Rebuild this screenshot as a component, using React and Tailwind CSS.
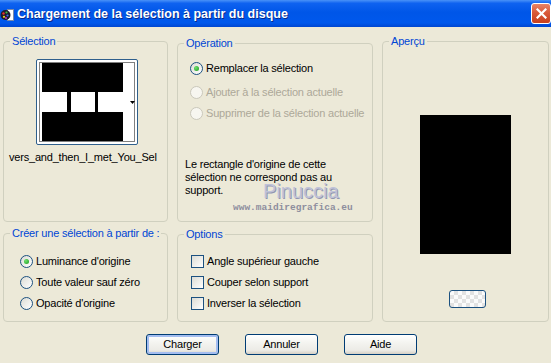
import React from "react";

function Group({ title, className, children }) {
  return (
    <fieldset className={`min-w-0 rounded-[4px] border border-[#d0d0bf] ${className}`}>
      <legend className="ml-[6px] px-[2px] text-[11px] leading-[13px] tracking-[-0.2px] text-[#0046d5]">
        {title}
      </legend>
      {children}
    </fieldset>
  );
}

function Radio({ checked, disabled }) {
  return (
    <span
      className={
        disabled
          ? "flex h-[13px] w-[13px] shrink-0 items-center justify-center rounded-full border border-[#cac8bb] bg-[#f7f6f0]"
          : "flex h-[13px] w-[13px] shrink-0 items-center justify-center rounded-full border border-[#1c5180] bg-[linear-gradient(135deg,#dcdcd4,#ffffff)]"
      }
    >
      {checked && (
        <span className="h-[5px] w-[5px] rounded-full bg-[radial-gradient(circle_at_35%_35%,#6fe06f,#1a9a1a)]" />
      )}
    </span>
  );
}

function Check() {
  return (
    <span className="block h-[13px] w-[13px] shrink-0 border border-[#1c5180] bg-[linear-gradient(135deg,#dcdcd4,#ffffff)]" />
  );
}

function Row({ children, label, disabled, className }) {
  return (
    <div className={`flex h-[13px] items-center gap-[3px] ${className || ""}`}>
      {children}
      <span
        className={`whitespace-nowrap text-[11px] leading-[13px] tracking-[-0.2px] ${
          disabled ? "text-[#aca899]" : "text-black"
        }`}
      >
        {label}
      </span>
    </div>
  );
}

function XPButton({ label, isDefault }) {
  return (
    <button
      className={`flex h-[21px] w-[73px] items-center justify-center rounded-[3px] border border-[#003c74] bg-[linear-gradient(180deg,#ffffff_0%,#f4f4f0_40%,#ecebe6_80%,#d6d0c5_100%)] text-[11px] leading-[13px] tracking-[-0.2px] text-black ${
        isDefault ? "shadow-[inset_0_0_0_2px_#a4bdf0]" : ""
      }`}
    >
      {label}
    </button>
  );
}

export default function App() {
  return (
    <div className="h-[363px] w-[551px] overflow-hidden bg-[#ece9d8] font-['Liberation_Sans',Arial,sans-serif] text-black">
      {/* Title bar */}
      <div className="flex h-[27px] items-center bg-[linear-gradient(180deg,#4a92f8_0%,#0f62f0_12%,#0056e8_45%,#0058ec_85%,#0046d0_100%)]">
        <svg width="15" height="16" viewBox="0 0 15 16" className="shrink-0">
          <rect x="7.5" y="3.5" width="6" height="11" fill="#ffffff" stroke="#7a8aa8" />
          <circle cx="5.5" cy="9" r="5" fill="#1b1b2b" />
          <circle cx="3.5" cy="7.5" r="1.2" fill="#e83030" />
          <circle cx="6.5" cy="6.5" r="1.1" fill="#40c040" />
          <circle cx="7.5" cy="9.5" r="1.1" fill="#3a6cf0" />
          <circle cx="4" cy="10.8" r="1.1" fill="#f0d020" />
          <circle cx="6" cy="12" r="0.9" fill="#d040d0" />
        </svg>
        <span className="ml-[2px] whitespace-nowrap text-[12.5px] font-bold leading-[16px] text-white [text-shadow:1px_1px_0_#0a2a8a]">
          Chargement de la sélection à partir du disque
        </span>
        <div className="ml-auto flex h-[21px] w-[20px] items-center justify-center rounded-[3px] border border-white bg-[linear-gradient(180deg,#e98466_0%,#d9593a_45%,#c8401e_100%)]">
          <svg width="11" height="11" viewBox="0 0 11 11">
            <path d="M1.5 1.5 L9.5 9.5 M9.5 1.5 L1.5 9.5" stroke="#ffffff" strokeWidth="2.2" strokeLinecap="square" />
          </svg>
        </div>
      </div>

      {/* Groups */}
      <div className="flex gap-[9px] pl-[3px] pt-[8px]">
        <div className="flex w-[165px] flex-col gap-[5px]">
          <Group title="Sélection" className="h-[187px]">
            <div className="ml-[32px] mt-[11px] h-[86px] w-[102px] rounded-[2px] border border-[#2f5f8c] bg-white">
              <svg width="100" height="84" viewBox="0 0 100 84" className="block">
                <rect x="5" y="3" width="81" height="29" fill="#000" />
                <rect x="30" y="32" width="4" height="20" fill="#000" />
                <rect x="58" y="32" width="3" height="20" fill="#000" />
                <rect x="5" y="52" width="81" height="29" fill="#000" />
                <rect
                  x="2.5"
                  y="2.5"
                  width="95"
                  height="79"
                  fill="none"
                  stroke="#000"
                  strokeWidth="1"
                  strokeDasharray="1 1"
                />
                <path d="M93 41 L98 41 L95.5 44 Z" fill="#000" />
              </svg>
            </div>
            <div className="mt-[6px] w-[154px] overflow-hidden whitespace-nowrap pl-[5px] text-[11px] leading-[13px] tracking-[-0.2px]">
              vers_and_then_I_met_You_Sel
            </div>
          </Group>
          <Group title="Créer une sélection à partir de :" className="h-[95px]">
            <div className="flex flex-col gap-[8px] pl-[16px] pt-[15px]">
              <Row label="Luminance d'origine">
                <Radio checked />
              </Row>
              <Row label="Toute valeur sauf zéro">
                <Radio />
              </Row>
              <Row label="Opacité d'origine">
                <Radio />
              </Row>
            </div>
          </Group>
        </div>

        <div className="flex w-[196px] flex-col gap-[6px] pt-[2px]">
          <Group title="Opération" className="h-[185px]">
            <div className="relative">
              <div className="flex flex-col pl-[12px] pt-[12px]">
                <Row label="Remplacer la sélection">
                  <Radio checked />
                </Row>
                <Row label="Ajouter à la sélection actuelle" disabled className="mt-[11px]">
                  <Radio disabled />
                </Row>
                <Row label="Supprimer de la sélection actuelle" disabled className="mt-[8px]">
                  <Radio disabled />
                </Row>
              </div>
              <p className="mt-[38px] pl-[7px] text-[11px] leading-[13px] tracking-[-0.2px]">
                Le rectangle d'origine de cette
                <br />
                sélection ne correspond pas au
                <br />
                support.
              </p>
              <span className="absolute left-[85px] top-[134px] whitespace-nowrap text-[20px] leading-[14px] text-[#bfc2d8] [text-shadow:1px_1px_0_#9296b2]">
                Pinuccia
              </span>
              <span className="absolute left-[55px] top-[152px] whitespace-nowrap font-['Liberation_Mono',monospace] text-[9.5px] font-bold leading-[12px] text-[#8e8e9e]">
                www.maidiregrafica.eu
              </span>
            </div>
          </Group>
          <Group title="Options" className="h-[94px]">
            <div className="flex flex-col gap-[8px] pl-[13px] pt-[14px]">
              <Row label="Angle supérieur gauche">
                <Check />
              </Row>
              <Row label="Couper selon support">
                <Check />
              </Row>
              <Row label="Inverser la sélection">
                <Check />
              </Row>
            </div>
          </Group>
        </div>

        <div className="w-[167px]">
          <Group title="Aperçu" className="h-[287px]">
            <div className="ml-[37px] mt-[67px] h-[139px] w-[91px] bg-black" />
            <div className="ml-[66px] mt-[36px] h-[18px] w-[37px] rounded-[3px] border border-[#1c5180] bg-[repeating-conic-gradient(#e2e2e2_0%_25%,#fbfbfb_0%_50%)] bg-[length:8px_8px]" />
          </Group>
        </div>
      </div>

      {/* Buttons */}
      <div className="mt-[12px] flex gap-[26px] pl-[146px]">
        <XPButton label="Charger" isDefault />
        <XPButton label="Annuler" />
        <XPButton label="Aide" />
      </div>
    </div>
  );
}
